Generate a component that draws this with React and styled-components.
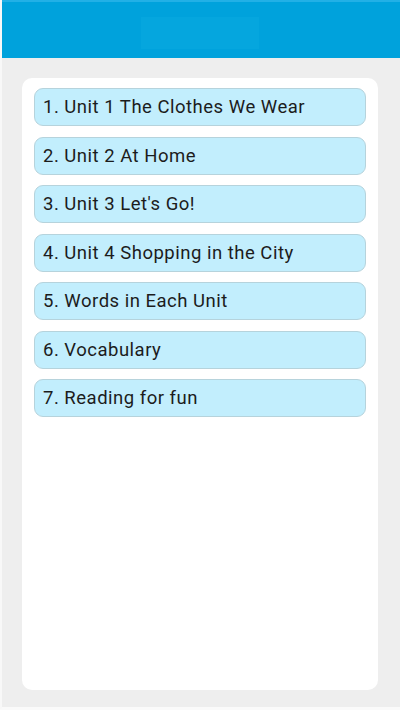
import React from 'react'
import styled, { createGlobalStyle } from 'styled-components'

const items = [
  '1. Unit 1 The Clothes We Wear',
  '2. Unit 2 At Home',
  "3. Unit 3 Let's Go!",
  '4. Unit 4 Shopping in the City',
  '5. Words in Each Unit',
  '6. Vocabulary',
  '7. Reading for fun',
]

const App = () => {
  return (
    <Page>
      <GlobalStyle />
      <Header>
        <Title />
      </Header>
      <Body>
        <Card>
          {items.map((text) => (
            <Item key={text}>{text}</Item>
          ))}
        </Card>
      </Body>
    </Page>
  )
}

export default App

const GlobalStyle = createGlobalStyle`
  html, body {
    margin: 0;
    padding: 0;
    background: #eeeeee;
  }
  body {
    font-family: Roboto, "Noto Sans", sans-serif;
  }
`

const Page = styled.div`
  width: 400px;
  height: 710px;
  display: flex;
  flex-direction: column;
  background: #eeeeee;
  border-left: 2px solid #f8f8f8;
  border-bottom: 3px solid #fafafa;
  box-sizing: border-box;
  overflow: hidden;
`

const Header = styled.div`
  height: 58px;
  flex-shrink: 0;
  margin-left: -2px;
  background: #00a2dc;
  border-top: 2px solid #22b0e6;
  box-sizing: border-box;
  display: flex;
  justify-content: center;
  padding-top: 15px;
`

const Title = styled.div`
  width: 118px;
  height: 32px;
  background: #05a6de;
`

const Body = styled.div`
  flex: 1;
  padding: 20px 22px 17px 20px;
  display: flex;
`

const Card = styled.div`
  flex: 1;
  background: #ffffff;
  border-radius: 10px;
  padding: 10px 12px;
  display: flex;
  flex-direction: column;
  gap: 10.5px;
`

const Item = styled.div`
  height: 38px;
  box-sizing: border-box;
  background: #c2eefd;
  border: 1px solid #b6d3dc;
  border-radius: 9px;
  padding-left: 8px;
  display: flex;
  align-items: center;
  font-size: 18.5px;
  letter-spacing: 0.5px;
  color: #1c1c1c;
`
